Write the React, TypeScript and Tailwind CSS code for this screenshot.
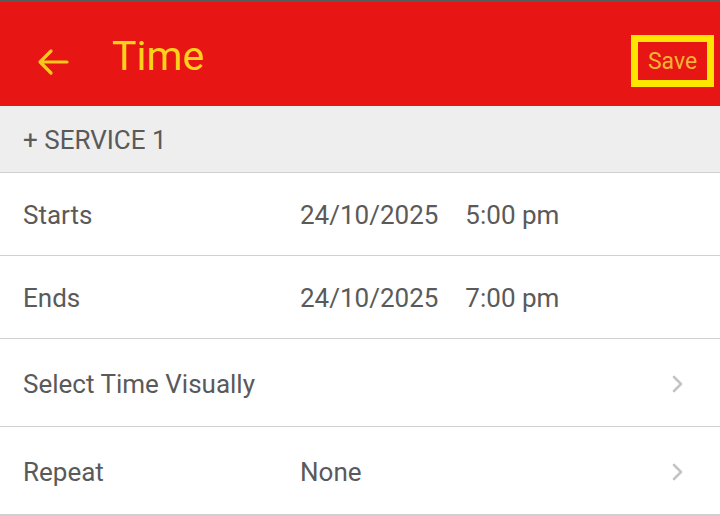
import React from 'react';

const Chevron = () => (
  <svg width="14" height="20" viewBox="0 0 14 20" fill="none" className="mr-[35px]">
    <path d="M3 3l7 7-7 7" stroke="#c4c4c4" strokeWidth="2.6" strokeLinecap="round" strokeLinejoin="round" />
  </svg>
);

const Row = ({ label, value, time, chevron, h }: { label: string; value?: string; time?: string; chevron?: boolean; h: string }) => (
  <div className={`flex items-center border-b border-[#d0d0d0] pt-[3px] ${h}`}>
    <div className="w-[300px] pl-[23px] text-[26px] text-[#5a5a5a]">{label}</div>
    <div className="flex-1 text-[26px] text-[#5a5a5a] flex">
      {value && <span>{value}</span>}
      {time && <span className="ml-[27px]">{time}</span>}
    </div>
    {chevron && <Chevron />}
  </div>
);

export default function App() {
  return (
    <div className="w-[720px] h-[516px] bg-white overflow-hidden flex flex-col" style={{ fontFamily: 'Roboto, "Liberation Sans", sans-serif' }}>
      <div className="h-[2px] bg-[#5a5a5a]" />
      {/* Header */}
      <div className="h-[104px] bg-[#e81515] flex items-start">
        <svg width="34" height="30" viewBox="0 0 34 30" className="ml-[36px] mt-[45px]">
          <path d="M31 15H4M15 4L4 15l11 11" stroke="#f7c81c" strokeWidth="3.2" fill="none" strokeLinecap="round" strokeLinejoin="round" />
        </svg>
        <div className="ml-[42px] mt-[30px] text-[41px] text-[#fcd21c] leading-[48px]">Time</div>
        <div className="ml-auto mr-[6px] mt-[33px] w-[83px] h-[52px] border-[7px] border-[#ffe600] flex items-center justify-center text-[23px] text-[#f5b431] leading-none">
          Save
        </div>
      </div>
      {/* Section */}
      <div className="h-[67px] bg-[#eeeeee] border-b border-[#d0d0d0] flex items-center pl-[23px] pt-[3px] text-[26px] text-[#5a5a5a]">
        + SERVICE 1
      </div>
      <Row label="Starts" value="24/10/2025" time="5:00 pm" h="h-[83px]" />
      <Row label="Ends" value="24/10/2025" time="7:00 pm" h="h-[83px]" />
      <Row label="Select Time Visually" chevron h="h-[88px]" />
      <Row label="Repeat" value="None" chevron h="h-[88px]" />
      <div className="flex-1 bg-[#cfcfcf]" />
    </div>
  );
}
